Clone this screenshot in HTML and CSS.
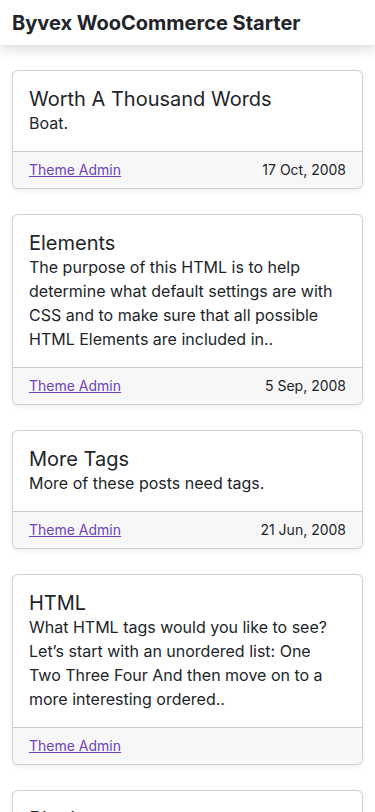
FILE: index.html
```html
<!DOCTYPE html>
<html lang="en">
<head>
<meta charset="utf-8">
<meta name="viewport" content="width=device-width, initial-scale=1">
<title>Byvex WooCommerce Starter</title>
<link rel="stylesheet" href="styles.css">
</head>
<body>
<header class="site-header">
  <h1 class="site-title">Byvex WooCommerce Starter</h1>
</header>
<main class="posts">
  <article class="card">
    <div class="card-body">
      <h2 class="card-title">Worth A Thousand Words</h2>
      <p class="card-text">Boat.</p>
    </div>
    <div class="card-footer">
      <a href="#" class="author">Theme Admin</a>
      <span class="date">17 Oct, 2008</span>
    </div>
  </article>
  <article class="card">
    <div class="card-body">
      <h2 class="card-title">Elements</h2>
      <p class="card-text">The purpose of this HTML is to help determine what default settings are with CSS and to make sure that all possible HTML Elements are included in..</p>
    </div>
    <div class="card-footer">
      <a href="#" class="author">Theme Admin</a>
      <span class="date">5 Sep, 2008</span>
    </div>
  </article>
  <article class="card">
    <div class="card-body">
      <h2 class="card-title">More Tags</h2>
      <p class="card-text">More of these posts need tags.</p>
    </div>
    <div class="card-footer">
      <a href="#" class="author">Theme Admin</a>
      <span class="date">21 Jun, 2008</span>
    </div>
  </article>
  <article class="card">
    <div class="card-body">
      <h2 class="card-title">HTML</h2>
      <p class="card-text">What HTML tags would you like to see? Let’s start with an unordered list: One Two Three Four And then move on to a more interesting ordered..</p>
    </div>
    <div class="card-footer">
      <a href="#" class="author">Theme Admin</a>
    </div>
  </article>
  <article class="card">
    <div class="card-body">
      <h2 class="card-title">Blockquotes</h2>
      <p class="card-text">Some quotes to check out.</p>
    </div>
    <div class="card-footer">
      <a href="#" class="author">Theme Admin</a>
    </div>
  </article>
</main>
</body>
</html>
```

FILE: styles.css
```css
* { box-sizing: border-box; }
html, body {
  margin: 0;
  padding: 0;
  background: #fff;
  color: #212529;
  font-family: Inter, "Liberation Sans", sans-serif;
}
.site-header {
  position: relative;
  z-index: 1;
  height: 45px;
  display: flex;
  align-items: center;
  padding: 0 12px;
  background: #fff;
  box-shadow: 0 4px 12px rgba(0, 0, 0, 0.15);
}
.site-title {
  margin: 0;
  font-size: 20px;
  font-weight: 700;
  line-height: 24px;
  color: #212529;
}
.posts {
  padding: 25px 12px 0;
  display: flex;
  flex-direction: column;
  gap: 25px;
}
.card {
  border: 1px solid rgba(0, 0, 0, 0.18);
  border-radius: 6px;
  overflow: hidden;
  background: #fff;
  box-shadow: 0 2px 4px rgba(0, 0, 0, 0.08);
}
.card-body {
  padding: 16px 16px;
}
.card-title {
  margin: 0;
  font-size: 20px;
  font-weight: 400;
  line-height: 24px;
}
.card-text {
  margin: 0;
  font-size: 16px;
  line-height: 24px;
}
.card-footer {
  display: flex;
  justify-content: space-between;
  align-items: center;
  padding: 8px 16px;
  background: #f7f7f7;
  border-top: 1px solid rgba(0, 0, 0, 0.18);
  font-size: 14px;
  line-height: 20px;
}
.author {
  color: #6f42c1;
  text-decoration: underline;
}
.date {
  color: #212529;
}
```
